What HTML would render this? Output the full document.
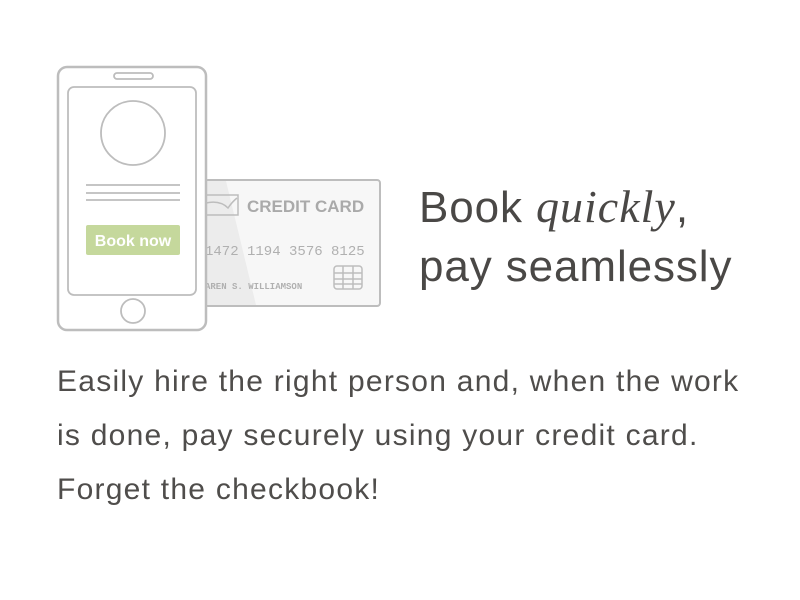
<!DOCTYPE html>
<html><head><meta charset="utf-8"><style>
html,body{margin:0;padding:0;background:#fff;width:800px;height:600px;overflow:hidden;position:relative;font-family:"Liberation Sans",sans-serif}
.h{position:absolute;left:419px;top:177px;font-size:44px;line-height:59px;color:#4a4846;white-space:nowrap;letter-spacing:0.9px}
.h i{font-family:"Liberation Serif",serif;font-size:46px;letter-spacing:1px}
.b{position:absolute;left:57px;top:355px;font-size:30px;line-height:54px;color:#4f4d4b;white-space:nowrap;letter-spacing:1.25px}
</style></head><body>
<svg width="800" height="600" style="position:absolute;left:0;top:0">
<g fill="none" stroke="#bdbdbd" stroke-width="2">
<rect x="205" y="180" width="175" height="126" rx="3" fill="#f7f7f7"/>
</g>
<polygon points="207,181 226,181 256,305 207,305" fill="#ececec"/>
<g stroke="#bdbdbd" fill="none" stroke-width="1.5">
<rect x="205" y="195" width="33" height="20" />
<path d="M206,203 Q220,200 228,208 Q232,202 237,198"/>
<rect x="334" y="266" width="28" height="23" rx="3"/>
<path d="M334,273 H362 M334,279 H362 M334,284 H362 M343,266 V289 M353,266 V289"/>
</g>
<text x="247" y="212" font-family="Liberation Sans,sans-serif" font-weight="bold" font-size="17" fill="#aaa">CREDIT CARD</text>
<text x="205" y="255" font-family="Liberation Mono,monospace" font-size="14" fill="#b0b0b0">1472 1194 3576 8125</text>
<text x="205" y="289" font-family="Liberation Mono,monospace" font-weight="bold" font-size="9" fill="#b0b0b0">AREN S. WILLIAMSON</text>
<g fill="none" stroke="#bdbdbd" stroke-width="2.5">
<rect x="58" y="67" width="148" height="263" rx="9" fill="#fff"/>
</g>
<g fill="none" stroke="#bdbdbd" stroke-width="1.8">
<rect x="68" y="87" width="128" height="208" rx="6"/>
<rect x="114" y="73" width="39" height="6" rx="3"/>
<circle cx="133" cy="133" r="32"/>
<circle cx="133" cy="311" r="12"/>
<path d="M86,185 H180 M86,193 H180 M86,200 H180"/>
</g>
<rect x="86" y="225" width="94" height="30" rx="2" fill="#c5d89c"/>
<text x="133" y="246" text-anchor="middle" font-family="Liberation Sans,sans-serif" font-weight="bold" font-size="16" fill="#fff">Book now</text>
</svg>
<div class="h">Book <i>quickly</i>,<br>pay seamlessly</div>
<div class="b">Easily hire the right person and, when the work<br>is done, pay securely using your credit card.<br>Forget the checkbook!</div>
</body></html>
